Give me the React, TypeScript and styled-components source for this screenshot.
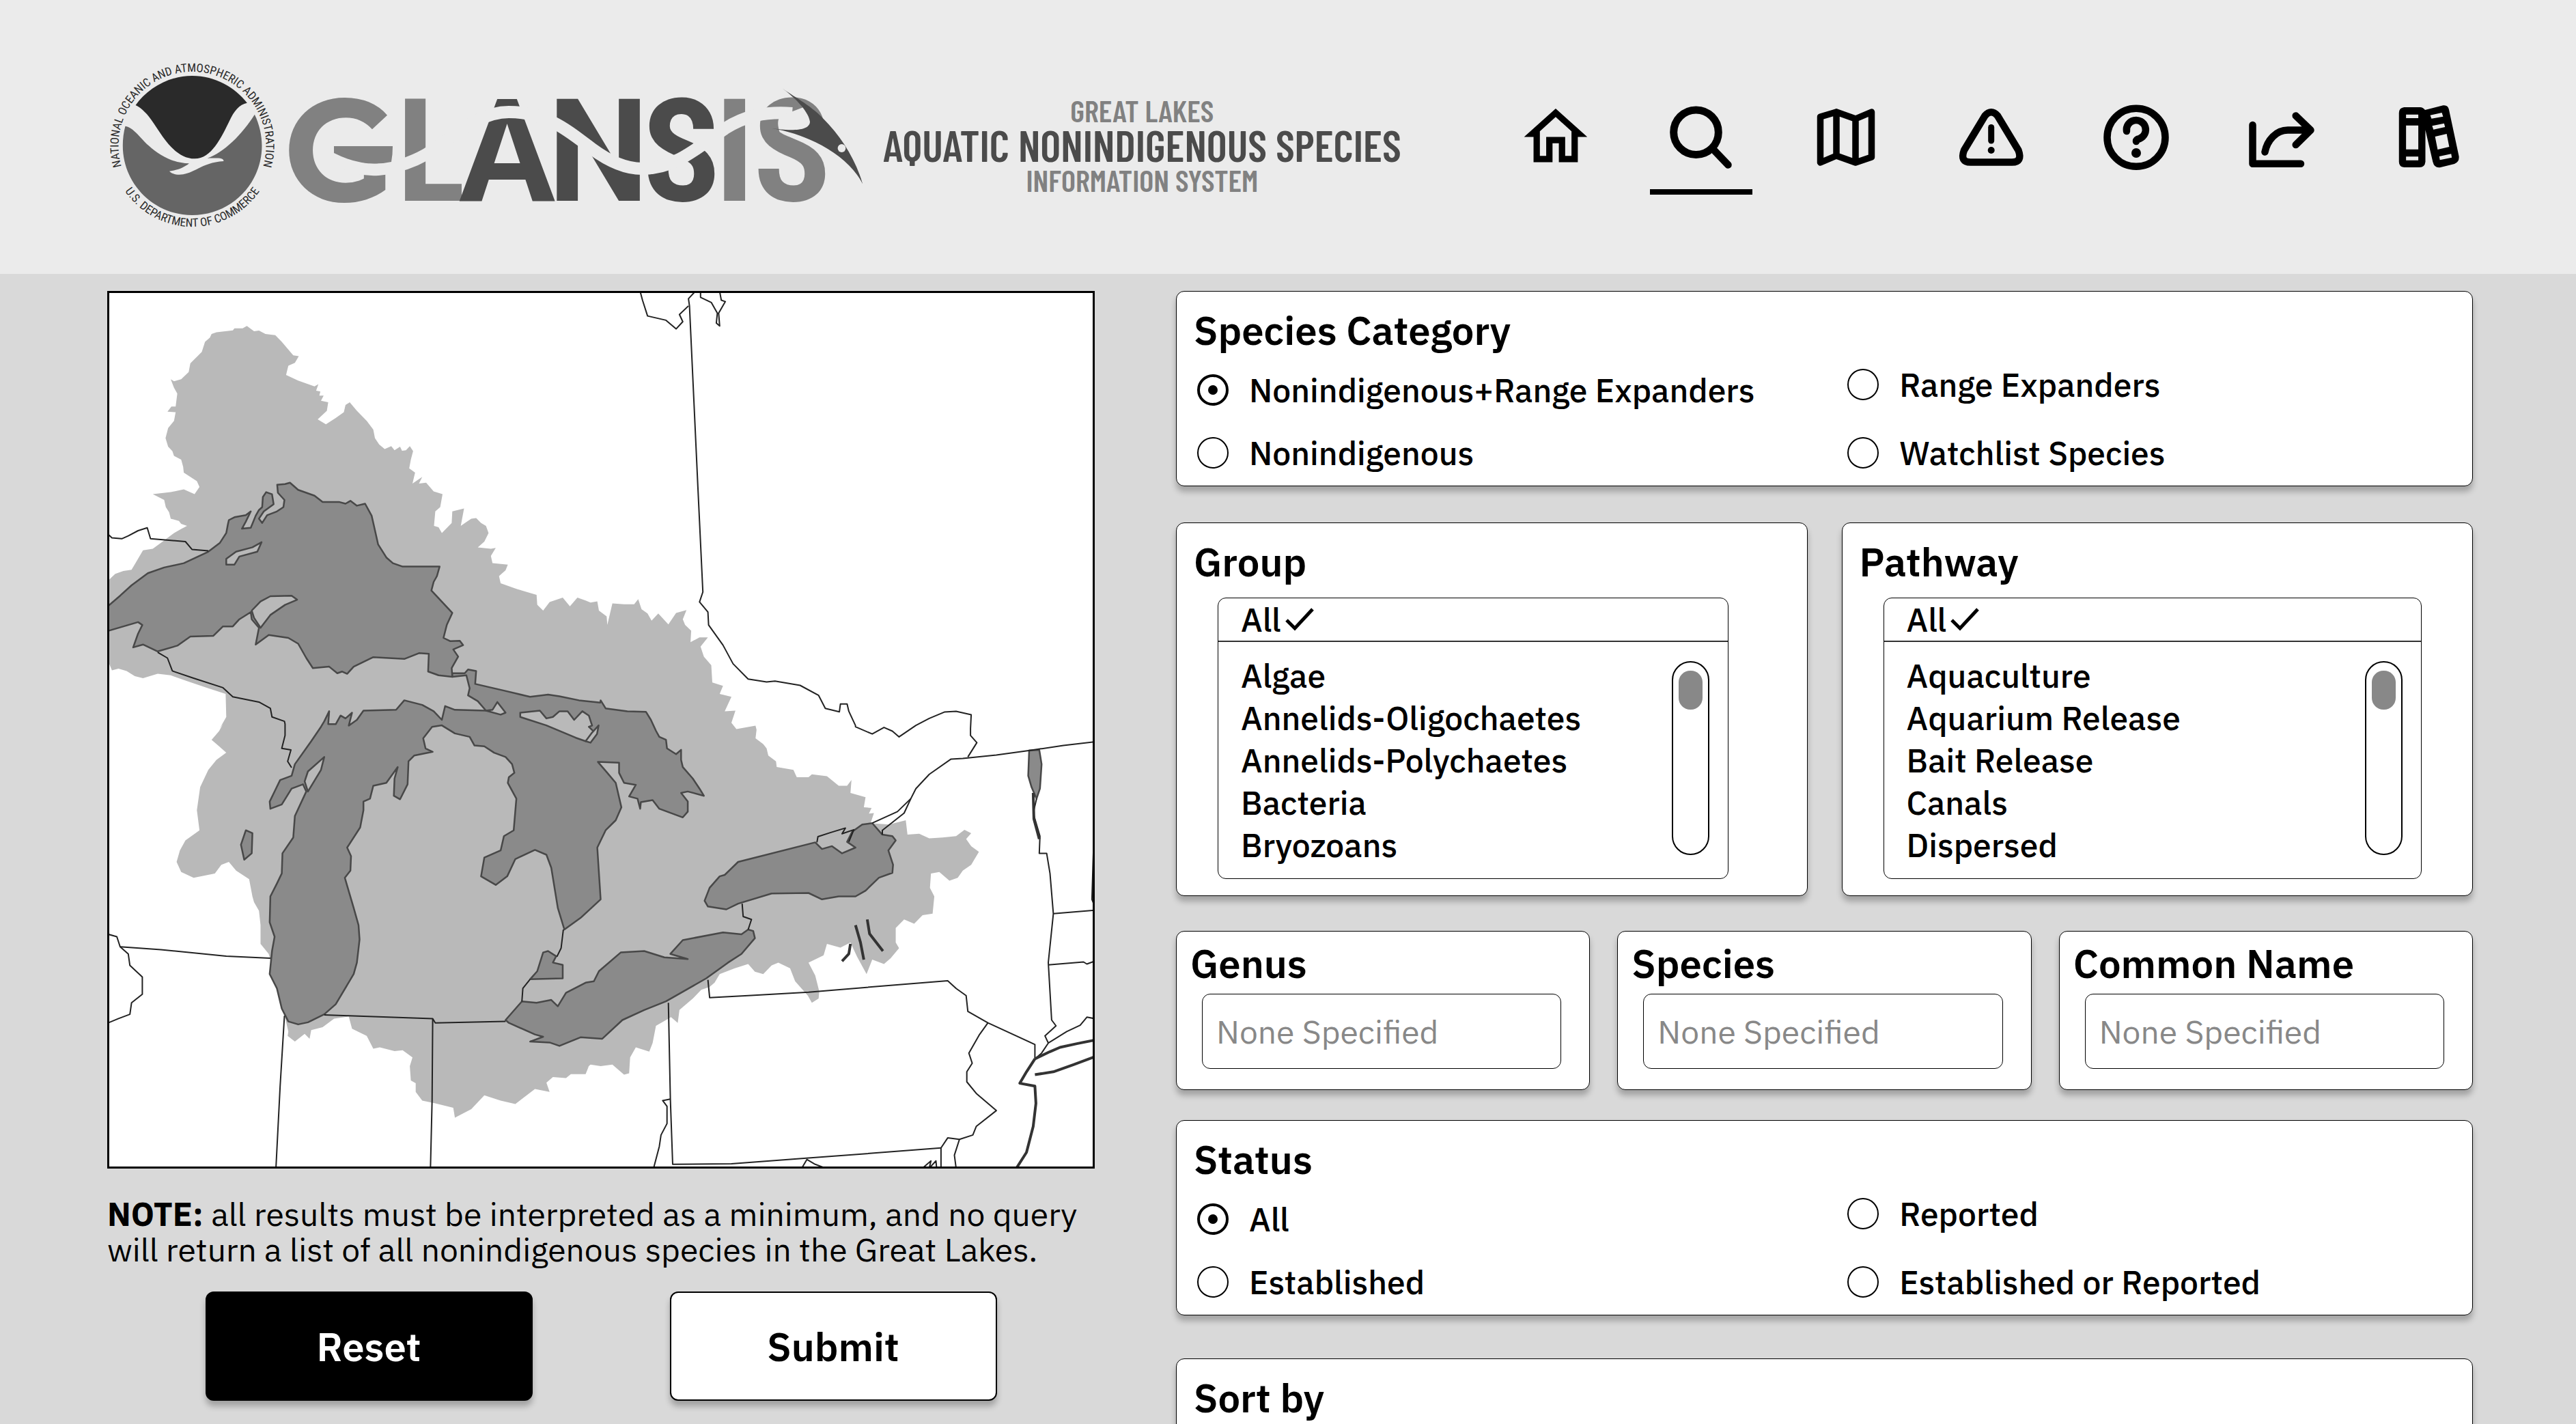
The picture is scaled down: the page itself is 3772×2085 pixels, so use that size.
import React from "react";
import styled, { createGlobalStyle } from "styled-components";

const GlobalStyle = createGlobalStyle`
  *, *::before, *::after { box-sizing: border-box; }
  body {
    margin: 0;
    background: #d9d9d9;
    color: #000;
    font-family: "IBM Plex Sans", Roboto, "Liberation Sans", sans-serif;
  }
  h1, h2, p, ul { margin: 0; padding: 0; }
`;

const Page = styled.div`
  height: 100vh;
  overflow-y: auto;
  scrollbar-width: none;
`;

/* ---------- header ---------- */

const Header = styled.header`
  display: flex;
  align-items: center;
  min-height: 401px;
  padding: 0 141px 0 157px;
  background: #ebebeb;
`;

const LogoSvg = styled.svg`
  display: block;
  flex: none;
  width: 1108px;
  height: 294px;
`;

const Tagline = styled.h1`
  display: flex;
  flex-direction: column;
  align-items: center;
  margin-left: 28px;
  padding-top: 22px;
  font-family: "Barlow Condensed", "Oswald", "Roboto Condensed", "Liberation Sans Narrow", sans-serif;
  font-weight: 600;
  white-space: nowrap;
`;

const TagSmall = styled.span`
  color: #818181;
  font-size: 45px;
  line-height: 46px;
`;

const TagLarge = styled.span`
  color: #4b4b4b;
  font-size: 64px;
  line-height: 56px;
`;

const Nav = styled.nav`
  display: flex;
  gap: 63px;
  margin-left: auto;
`;

const NavLink = styled.a<{ $active?: boolean }>`
  display: flex;
  justify-content: center;
  width: 150px;
  padding: 28px 0 20px;
  border-bottom: 8px solid ${(p) => (p.$active ? "#000" : "transparent")};
  color: #000;
`;

const NavSvg = styled.svg`
  display: block;
  width: 112px;
  height: 112px;
  fill: none;
  stroke: currentColor;
  stroke-width: 10.5;
  stroke-linecap: round;
  stroke-linejoin: round;
`;

function NavItem(props: { label: string; x: number; active?: boolean; children: React.ReactNode }) {
  return (
    <NavLink href="#" aria-label={props.label} aria-current={props.active ? "page" : undefined} $active={props.active}>
      <NavSvg viewBox={`${props.x} 143 112 112`} aria-hidden="true">
        {props.children}
      </NavSvg>
    </NavLink>
  );
}

const RING_FONT = "'Roboto Condensed', 'Liberation Sans Narrow', sans-serif";

const WORDMARK = [
  { letter: "G", x: 415, size: 212, color: "#818181", font: "Montserrat, Inter, 'Liberation Sans', sans-serif" },
  { letter: "L", x: 581, size: 210, color: "#818181", font: "'Roboto Condensed', Roboto, sans-serif" },
  { letter: "A", x: 672, size: 210, color: "#4b4b4b", font: "Roboto, 'Liberation Sans', sans-serif" },
  { letter: "N", x: 802, size: 210, color: "#4b4b4b", font: "Roboto, 'Liberation Sans', sans-serif" },
  { letter: "S", x: 941, size: 210, color: "#4b4b4b", font: "'Roboto Condensed', Roboto, sans-serif" },
  { letter: "I", x: 1045, size: 210, color: "#818181", font: "Roboto, 'Liberation Sans', sans-serif" },
  { letter: "S", x: 1103, size: 210, color: "#818181", font: "'Roboto Condensed', Roboto, sans-serif" },
];

function Logo() {
  return (
    <LogoSvg viewBox="157 54 1108 294" role="img" aria-label="NOAA GLANSIS">
      <defs>
        <path id="ringTop" d="M281.5 321 A108 108 0 1 1 281.6 321" />
        <path id="ringBottom" d="M162.5 213 A119 119 0 0 0 400.5 213" />
      </defs>
      <g transform="translate(130 70) scale(0.40816 0.33333)">
        <path
          fill="#2a2a2a"
          d="M168 252 C210 180 285 123 371 123 C455 123 525 175 568 242 C540 248 520 280 505 320 C475 395 440 487 380 487 C310 487 265 390 232 330 C212 292 190 265 168 252Z"
        />
        <path
          fill="#656565"
          d="M131 344 C160 350 180 390 215 430 C255 475 305 507 360 508 C340 527 320 537 289 542 C298 552 308 557 325 557 C380 555 400 505 484 498 C482 482 465 485 425 485 C485 460 550 380 595 293 C612 335 621 385 621 430 C621 598 510 735 371 735 C233 735 122 598 122 430 C122 400 125 370 131 344Z"
        />
      </g>
      <g fill="#2a2a2a" fontFamily={RING_FONT} fontSize="17" textAnchor="middle">
        <text>
          <textPath href="#ringTop" startOffset="50%">NATIONAL OCEANIC AND ATMOSPHERIC ADMINISTRATION</textPath>
        </text>
        <text>
          <textPath href="#ringBottom" startOffset="50%">U.S. DEPARTMENT OF COMMERCE</textPath>
        </text>
      </g>
      {WORDMARK.map((item) => (
        <text key={item.x} x={item.x} y="294" fill={item.color} fontFamily={item.font} fontSize={item.size} fontWeight="700">
          {item.letter}
        </text>
      ))}
      <path
        fill="none"
        stroke="#ebebeb"
        strokeWidth="18"
        d="M490 232 Q520 250 554 248 Q590 245 624 226 C665 200 700 164 745 164 C800 164 830 190 867 218 C890 235 915 247 940 247 C985 247 1015 222 1062 188 C1090 170 1120 163 1160 166"
      />
      {/* tail of the wave, where it starts inside the first letter */}
      <path fill="#818181" d="M489 214 H575 Q575 226 573 237 Q532 246 489 224Z" />
      <g transform="translate(750 90) scale(0.34439 0.33333)">
        <path fill="#ebebeb" d="M1140 240 C1125 260 1130 285 1137 310 C1180 340 1240 345 1290 368 L1300 260 L1240 200Z" />
        <path
          fill="#4b4b4b"
          d="M1148 118 C1190 150 1265 190 1320 248 C1400 330 1460 430 1490 538 C1455 465 1380 400 1290 355 C1230 325 1170 305 1105 294 C1150 300 1265 315 1266 265 C1262 225 1210 165 1148 118Z"
        />
        <ellipse cx="1401" cy="381" rx="17" ry="18" fill="#ebebeb" />
      </g>
    </LogoSvg>
  );
}

function MainNav() {
  return (
    <Nav aria-label="Main">
      <NavItem label="Home" x={2222}>
        <g transform="translate(2222.4 143) scale(4.63)">
          <path
            fill="currentColor"
            stroke="none"
            d="M12 5.69l5 4.5V18h-2v-6H9v6H7v-7.81l5-4.5M12 3L2 12h3v8h6v-6h2v6h6v-8h3L12 3z"
          />
        </g>
      </NavItem>
      <NavItem label="Search" x={2435} active>
        <circle cx="2483.5" cy="191.7" r="32.8" strokeWidth="11" />
        <path d="M2508 216 L2530.5 239.5" />
      </NavItem>
      <NavItem label="Map" x={2648}>
        <path strokeWidth="9.5" d="M2665.5 169 L2689 162 L2717 172 L2740.5 162 V228 L2717 236 L2689 226 L2665.5 236Z M2689 162 V226 M2717 172 V236" />
      </NavItem>
      <NavItem label="Alerts" x={2861}>
        <path d="M2906.5 167.5 Q2915.7 157 2925 167.5 L2955.5 218 Q2962 235.5 2946 235.5 H2885.5 Q2869.5 235.5 2876 218Z" />
        <path strokeWidth="9" d="M2915.7 184.5 V204" />
        <circle cx="2915.7" cy="218" r="5" fill="currentColor" stroke="none" />
      </NavItem>
      <NavItem label="Help" x={3074}>
        <circle cx="3128" cy="199.3" r="42.5" />
        <path d="M3114 190 A14 14 0 1 1 3133 201 Q3128 202 3128 205" />
        <circle cx="3128" cy="222" r="7" fill="currentColor" stroke="none" />
      </NavItem>
      <NavItem label="Share" x={3287}>
        <path d="M3298.5 181 V237.7 H3369 M3316.5 220.5 C3320 203 3333 188.5 3350 188.5 H3383 M3361.7 167.5 L3383.5 188.5 L3361.7 210" />
      </NavItem>
      <NavItem label="Library" x={3500}>
        <g transform="translate(2920 120) scale(0.47195 0.33333)">
          <path
            fill="currentColor"
            fillRule="evenodd"
            stroke="none"
            d="M1272 105 H1322 Q1330 105 1337 117 L1393 97 Q1408 94 1411 115 L1442 320 Q1444 345 1428 354 L1385 369 Q1366 374 1361 345 L1338 205 V345 Q1336 369 1320 369 H1272 Q1256 366 1256 345 V130 Q1256 108 1272 105Z M1278 137 H1316 V153 H1278Z M1278 185 H1316 V290 H1278Z M1278 322 H1316 V338 H1278Z M1353 140 L1389 129 L1393 146 L1357 155Z M1359 187 L1396 176 L1399 192 L1363 203Z M1368 234 L1404 222 L1412 279 L1376 291Z M1381 321 L1418 310 L1420 326 L1383 337Z"
          />
        </g>
      </NavItem>
    </Nav>
  );
}

/* ---------- basin map ---------- */

type Sheet = "nw" | "ne" | "sw" | "se";
type Segment = [Sheet, string];

/* Each survey sheet has its own origin and scale: [x, y, units per x, units per y]. */
const SHEETS: Record<Sheet, [number, number, number, number]> = {
  nw: [140, 410, 2.0907, 2.3758],
  ne: [850, 410, 2.0364, 2.3758],
  sw: [140, 1060, 2.0907, 2.3758],
  se: [850, 1060, 2.0364, 2.3758],
};

function trace(...segments: Segment[]): string {
  return segments
    .flatMap(([sheet, text]) => {
      const [ox, oy, sx, sy] = SHEETS[sheet];
      return text.split(" ").map((pair) => {
        const [x, y] = pair.split(",").map(Number);
        return `${(ox + x / sx).toFixed(1)},${(oy + y / sy).toFixed(1)}`;
      });
    })
    .join(" ");
}

const BASIN = trace(
  ["nw", "36,1048 60,1022 85,1012 110,1008 122,985 145,940 175,935 205,910 240,880 262,866 280,855 262,848 255,838 230,830 225,808 215,790 210,765 175,745 230,738 270,728 303,745 318,720 310,700 290,685 270,670 268,650 262,625 240,612 235,595 222,580 214,550 222,515 240,490 245,460 220,458 232,440 245,440 250,395 240,375 230,345 240,352 262,345 285,320 290,290 325,250 335,215 350,200 355,188 370,182 420,175 425,168 450,168 463,160 485,178 500,176 520,188 550,192 570,215 605,262 622,265 610,288 590,298 583,330 620,350 670,370 682,362 675,385 688,388 685,402 698,402 690,420 712,425 708,455 680,485 705,502 735,480 760,460 765,435 778,425 800,455 830,490 850,520 855,550 868,572 885,588 905,578 915,592 932,580 938,594 950,592 962,578 972,595 965,625 960,655 978,670 970,708 1000,685 990,708 1012,705 1035,735 1062,745 1055,790 1040,805 1036,855 1050,860 1060,880 1090,845 1092,805 1128,795 1118,855 1150,830 1165,828 1180,845 1195,855 1203,880 1190,910 1170,930 1210,935 1225,932 1210,960 1215,985 1262,990 1255,1010 1235,1030 1240,1055 1290,1075 1350,1095 1352,1130 1370,1150 1390,1120 1430,1105 1452,1135 1475,1105 1500,1115"],
  ["ne", "30,1122 50,1118 55,1150 78,1170 80,1200 95,1125 130,1128 160,1128 172,1110 182,1145 200,1160 212,1185 232,1160 262,1198 285,1158 316,1148 305,1180 312,1200 330,1220 328,1260 355,1243 380,1243 358,1275 368,1310 390,1340 393,1400 425,1412 415,1440 450,1450 430,1500 462,1498 450,1540 465,1562 522,1550"],
  ["se", "525,20 522,50 545,70 555,85 560,110 583,130 585,150 635,160 645,185 680,185 690,175 735,182 770,215 795,215 808,195 805,240 850,255 845,290 868,292 860,312 875,310 865,345 920,350 970,335 975,385 1010,382 1040,398 1080,395 1120,390 1145,368 1165,380 1150,400 1165,425 1188,445 1165,490 1140,510 1125,535 1100,545 1070,515 1045,520 1042,570 1055,600 1050,660 1020,665 995,695 965,680 940,710 940,760 950,780 925,815 905,835 870,820 853,870 825,810 805,760 775,778 735,765 725,805 680,830 700,875 712,930 710,955 690,970 678,945 640,895 625,850 590,830 570,840 545,870 520,862 500,835 460,850 415,870 400,900 385,915 360,925 335,955 295,995 290,1040 270,1020 225,1050 215,1110 205,1140 165,1125 148,1160 145,1215 130,1220 95,1185 60,1190 30,1185 0,1215"],
  ["sw", "1510,1190 1500,1218 1455,1218 1440,1232 1400,1228 1380,1248 1390,1280 1345,1270 1310,1300 1285,1322 1240,1310 1190,1292 1150,1340 1100,1370 1095,1335 1040,1320 1000,1310 980,1280 980,1250 965,1240 962,1190 970,1160 940,1135 915,1138 870,1125 850,1130 830,1085 785,1060 775,1018 730,1025 695,1055 660,1065 655,1095 640,1078 610,1105 588,1085 590,1070 580,1020 530,800 505,765 505,700 500,650 485,620 480,600 470,540 430,510 408,480 385,490 365,520 300,535 262,515 248,480 258,440 275,405 318,370 310,300 320,220 345,160 370,125 400,100 375,75 355,55 378,25 390,0"],
  ["nw", "380,1560 400,1520 398,1440 345,1420 280,1395 230,1375 190,1370 145,1385 120,1378 95,1360 70,1352 50,1358 36,1320"]
);

const LAKES = [
  /* Superior */
  trace(["nw", "34,1138 75,1098 110,1062 160,1020 210,1000 270,985 345,945 380,915 400,880 405,850 408,835 425,825 460,818 475,805 460,840 448,865 475,862 490,820 500,800 510,790 512,755 522,738 540,745 545,780 515,805 500,830 510,845 525,818 555,805 575,790 578,765 558,740 556,712 580,710 595,705 620,730 670,750 695,772 745,772 765,778 780,768 800,785 825,778 845,820 855,870 865,920 890,965 910,985 940,997 1053,997 1045,1030 1035,1050 1028,1080 1092,1158 1075,1200 1065,1245 1085,1256 1115,1255 1125,1270 1095,1285 1110,1310 1090,1350 1092,1380 1050,1375 1018,1362 1020,1300 990,1298 945,1318 850,1312 790,1345 770,1370 755,1362 740,1368 715,1345 665,1350 645,1315 620,1265 590,1245 530,1235 490,1268 500,1210 478,1180 475,1155 440,1180 420,1205 390,1205 360,1238 290,1240 250,1272 190,1292 145,1268 115,1278 130,1230 143,1200 130,1190 34,1222"]),
  /* Michigan and Huron */
  trace(
    ["nw", "1092,1368 1130,1368 1140,1355 1165,1360 1162,1405 1250,1428 1330,1450 1385,1442 1420,1448 1480,1462 1545,1470"],
    ["ne", "60,1462 75,1490 140,1500 195,1502 210,1530 225,1568"],
    ["se", "235,45 255,55 258,85 285,105 300,90 300,125 305,150 335,190 355,225 368,250 320,235 300,240 320,270 320,305 305,325 235,295 215,265 180,272 178,295 170,260 145,252 165,212 130,205 115,170 115,135 52,132 80,170 105,205 122,290 105,335 75,370 50,430 60,610 0,675"],
    ["sw", "1435,715 1415,640 1395,500 1380,455 1345,438 1285,470 1260,530 1225,560 1180,530 1190,465 1240,440 1250,390 1280,370 1288,260 1262,205 1265,185 1282,170 1275,140 1255,115 1220,100 1190,78 1160,75 1145,45 1100,33 1060,5 1030,10 1003,50 1010,85 1032,97 975,110 958,130 955,210 932,262 913,250 915,190 925,150 890,205 850,215 840,260 820,270 820,300 810,360 770,430 782,460 780,510 763,535 790,640 805,700 808,750 800,830 790,870 735,975 700,1010 650,1038 620,1045 590,1035 570,990 555,920 533,870 540,790 548,740 533,690 535,600 555,555 570,520 572,450 605,395 610,320 645,235 635,210 600,225 570,280 535,295 533,270 550,230 565,195 600,180 610,140 660,60 690,10"],
    ["nw", "700,1535 715,1500 712,1545 735,1545 750,1515 765,1525 785,1505 775,1550 800,1530 820,1498 920,1495 945,1462 1000,1478 1035,1500 1060,1530 1070,1482 1100,1495 1195,1498 1170,1465 1140,1445 1145,1420 1135,1375 1092,1380"]
  ),
  /* Erie */
  trace(
    ["sw", "1255,1030 1305,965 1350,970 1395,960 1415,982 1440,935 1500,900"],
    ["se", "40,895 55,860 120,795 190,790 250,812 320,818 268,800 305,752 425,725 480,732 500,715 515,720 520,745 480,800 440,830 375,885 255,965 190,995 125,1030 65,1095 0,1090"],
    ["sw", "1420,1120 1390,1108 1330,1105 1370,1088 1345,1080 1265,1040"]
  ),
  /* Ontario */
  trace(["se", "370,615 385,570 415,530 430,525 470,480 700,412 720,435 750,425 780,450 820,430 795,410 810,375 840,350 870,345 900,385 930,390 940,405 918,440 932,490 930,518 890,535 850,580 820,600 770,600 720,610 680,588 570,590 470,625 435,645 380,635"]),
  /* St. Clair */
  trace(["sw", "1370,795 1385,790 1410,808 1400,830 1430,838 1430,885 1330,888 1352,860"]),
  /* Winnebago */
  trace(["sw", "460,370 480,380 478,450 455,472 445,420"]),
  /* Champlain */
  trace(["se", "1338,92 1368,90 1375,140 1370,225 1360,260 1345,220 1335,180"]),
];

const ISLANDS = [
  trace(["nw", "400,990 400,970 430,945 480,930 508,912 495,945 440,962 425,990"]),
  trace(["nw", "478,1150 505,1118 535,1100 600,1098 617,1112 580,1130 535,1165 505,1210 485,1175"]),
  trace(
    ["nw", "1300,1505 1360,1498 1380,1525 1400,1520 1420,1500 1445,1500 1465,1530 1490,1500 1510,1515 1520,1550"],
    ["sw", "1510,10 1528,30 1500,60 1470,48 1380,5"],
    ["nw", "1300,1520"]
  ),
  trace(["nw", "1195,1498 1215,1495 1230,1468 1255,1505 1240,1512"]),
  trace(["sw", "640,200 650,165 700,115 690,160 650,235"]),
  trace(["sw", "1500,60 1520,30 1540,5 1535,35 1515,65"]),
];

const BORDERS = [
  trace(["nw", "34,880 50,897 80,900 100,890 130,872 158,862 168,900 275,910 295,937 345,942"]),
  trace(["nw", "190,1295 220,1315 235,1360 300,1385 390,1418 420,1450 500,1468 535,1490 540,1520 578,1535"], ["sw", "580,0 580,40 570,85 598,90 588,130 600,152"]),
  trace(["ne", "342,40 322,65 325,90 350,720 365,1085 355,1120 380,1155 382,1200 425,1270 455,1335 500,1388 555,1398 580,1395 655,1410 710,1445 730,1490 772,1502 775,1475 795,1475 800,1500 820,1550"], ["se", "820,10 870,35 905,12 930,25 950,45 1000,5"], ["ne", "1040,1525 1085,1503 1120,1500 1165,1512 1163,1560"], ["se", "1163,40 1182,65 1155,115"]),
  trace(["ne", "178,40 185,70 200,125 255,140 285,170 305,145 295,120 322,90"]),
  trace(["ne", "358,40 358,60 390,78 408,115 405,150 415,160 412,115 432,75 420,70 415,40"]),
  trace(["se", "870,345 945,305 985,260 1000,225 1040,175 1105,122 1140,120 1240,108 1340,92 1440,75 1533,62"]),
  trace(["se", "900,385 900,370 965,310 985,260"]),
  trace(["se", "1360,260 1350,310 1370,390 1368,450 1390,450 1400,520 1410,660 1395,830 1405,1030 1418,1050 1385,1085 1395,1110 1375,1145 1355,1165"]),
  trace(["se", "1410,660 1533,648"]),
  trace(["se", "1395,838 1500,828 1510,835 1533,825"]),
  trace(["se", "380,890 385,952 500,945 680,933 1095,893 1120,920 1150,945 1155,1000 1215,1040 1355,1115 1355,1165"]),
  trace(["se", "1215,1040 1190,1080 1158,1145 1168,1180 1152,1210 1152,1245 1180,1285 1240,1345 1180,1400 1170,1430 1130,1445 1095,1440 1075,1475 1075,1545"]),
  trace(["se", "1130,1445 1115,1500 1120,1545"]),
  trace(["se", "262,970 268,1305 275,1532 450,1530 680,1510 1075,1475"]),
  trace(["se", "268,1305 245,1310 258,1330 258,1390 240,1430 235,1470 218,1545"]),
  trace(["se", "660,1545 675,1515 700,1532 730,1545"]),
  trace(["se", "1020,1545 1045,1520 1040,1545 1060,1520 1062,1545"]),
  trace(["se", "1395,1110 1450,1070 1490,1048 1510,1020 1533,1025"]),
  trace(["sw", "578,1015 565,1260 552,1548"]),
  trace(["sw", "700,1012 775,1015 1032,1025 1040,1040 1255,1035"]),
  trace(["sw", "1032,1025 1030,1310 1025,1548"]),
  trace(["sw", "75,775 200,785 400,808 535,815"]),
  trace(["sw", "34,730 65,740 75,775 100,800 105,840 143,880 143,940 110,970 105,1010 70,1025 38,1040"]),
  trace(["sw", "1432,715 1425,780 1412,810"]),
  trace(["sw", "1330,888 1308,920 1305,965"]),
  trace(["se", "482,625 485,670 510,680 500,715"]),
  trace(["se", "705,412 708,392 745,378 790,362 780,382 815,368 800,410"]),
  trace(["se", "1530,425 1525,610 1532,630"]),
];

const COASTS = [
  trace(["se", "1355,1165 1400,1140 1430,1125 1480,1112 1533,1100"]),
  trace(["se", "1355,1220 1410,1210 1470,1185 1533,1158"]),
  trace(["se", "1355,1165 1330,1210 1310,1250 1355,1260 1358,1320 1350,1400 1330,1490 1300,1545"]),
  trace(["se", "820,700 835,760 845,820"]),
  trace(["se", "855,680 862,730 902,790"]),
  trace(["se", "805,765 800,800 780,825"]),
  trace(["se", "1350,240 1352,330 1368,400"]),
];

const MapFrame = styled.div`
  border: 3px solid #000;
  background: #fff;
`;

const MapSvg = styled.svg`
  display: block;
  width: 100%;
  height: auto;
  stroke-linejoin: round;
`;

function BasinMap() {
  return (
    <MapFrame>
      <MapSvg viewBox="160 429 1440 1279" role="img" aria-label="Great Lakes basin">
        <polygon points={BASIN} fill="#b9b9b9" />
        <g fill="#8a8a8a" stroke="#484848" strokeWidth="2.5">
          {LAKES.map((points) => (
            <polygon key={points} points={points} />
          ))}
        </g>
        <g fill="#b9b9b9" stroke="#484848" strokeWidth="2.5">
          {ISLANDS.map((points) => (
            <polygon key={points} points={points} />
          ))}
        </g>
        <g fill="none" stroke="#222" strokeWidth="2">
          {BORDERS.map((points) => (
            <polyline key={points} points={points} />
          ))}
        </g>
        <g fill="none" stroke="#333" strokeWidth="4">
          {COASTS.map((points) => (
            <polyline key={points} points={points} />
          ))}
        </g>
      </MapSvg>
    </MapFrame>
  );
}

/* ---------- page body ---------- */

const Main = styled.main`
  display: grid;
  grid-template-columns: minmax(0, 1446fr) minmax(0, 1899fr);
  gap: 119px;
  align-items: start;
  padding: 25px 151px 64px 157px;
`;

const Note = styled.p`
  margin-top: 40px;
  font-size: 48px;
  line-height: 52px;
  white-space: nowrap;
`;

const Actions = styled.div`
  display: flex;
  justify-content: center;
  gap: 201px;
  margin-top: 36px;
`;

const ActionButton = styled.button<{ $primary?: boolean }>`
  width: 479px;
  height: 160px;
  border: 2px solid #000;
  border-radius: 12px;
  background: ${(p) => (p.$primary ? "#000" : "#fff")};
  color: ${(p) => (p.$primary ? "#fff" : "#000")};
  box-shadow: 0 8px 8px rgba(0, 0, 0, 0.25);
  font-family: inherit;
  font-size: 58px;
  font-weight: 600;
`;

const Card = styled.section`
  padding: 25px 0 17px;
  border: 1px solid #000;
  border-radius: 12px;
  background: #fff;
  box-shadow: 0 8px 8px rgba(0, 0, 0, 0.25);
`;

const CardTitle = styled.h2`
  padding-left: 25px;
  font-size: 58px;
  font-weight: 600;
  line-height: 64px;
`;

const Row = styled.div<{ $columns?: number; $gap?: number; $space?: number }>`
  display: grid;
  grid-template-columns: repeat(${(p) => p.$columns ?? 1}, minmax(0, 1fr));
  gap: ${(p) => p.$gap ?? 0}px;
  margin-top: ${(p) => p.$space ?? 0}px;
`;

const RadioGrid = styled.div`
  display: grid;
  grid-template-columns: 51% 1fr;
  margin-top: 16px;
  padding-left: 30px;
`;

const RadioColumn = styled.div<{ $gap: number }>`
  display: flex;
  flex-direction: column;
  justify-content: flex-end;
  gap: ${(p) => p.$gap}px;
`;

const RadioLabel = styled.label`
  display: flex;
  align-items: center;
  gap: 30px;
  font-size: 48px;
  font-weight: 500;
  line-height: 62px;
`;

const Radio = styled.input`
  appearance: none;
  display: grid;
  place-items: center;
  width: 46px;
  height: 46px;
  margin: 0;
  border: 2px solid #000;
  border-radius: 50%;
  background: #fff;

  &:checked {
    border-width: 4px;
  }

  &:checked::before {
    content: "";
    width: 14px;
    height: 14px;
    border-radius: 50%;
    background: #000;
  }
`;

function RadioCard(props: { title: string; name: string; left: string[]; right: string[] }) {
  const option = (text: string, checked: boolean) => (
    <RadioLabel key={text}>
      <Radio type="radio" name={props.name} defaultChecked={checked} />
      {text}
    </RadioLabel>
  );
  return (
    <Card>
      <CardTitle>{props.title}</CardTitle>
      <RadioGrid>
        <RadioColumn $gap={30}>{props.left.map((text, i) => option(text, i === 0))}</RadioColumn>
        <RadioColumn $gap={38}>{props.right.map((text) => option(text, false))}</RadioColumn>
      </RadioGrid>
    </Card>
  );
}

const ListFrame = styled.div<{ $inset: number }>`
  margin: 20px ${(p) => p.$inset}px 7px 60px;
  border: 1px solid #000;
  border-radius: 12px;
  font-size: 48px;
  font-weight: 500;
  line-height: 62px;
`;

const ListAll = styled.div`
  display: flex;
  align-items: center;
  gap: 5px;
  padding-left: 33px;
  border-bottom: 2px solid #333;
`;

const ListBody = styled.div`
  display: flex;
  justify-content: space-between;
`;

const Options = styled.ul`
  padding: 18px 0 18px 33px;
  list-style: none;
`;

const ScrollTrack = styled.div`
  width: 55px;
  height: 284px;
  margin: 28px 27px 0 0;
  padding: 12px 8px;
  border: 2px solid #000;
  border-radius: 28px;
`;

const ScrollThumb = styled.div`
  height: 57px;
  border-radius: 17px;
  background: #888;
`;

const CheckSvg = styled.svg`
  width: 44px;
  height: 36px;
  fill: none;
  stroke: #000;
  stroke-width: 5;
`;

function ListCard(props: { title: string; inset: number; options: string[] }) {
  return (
    <Card>
      <CardTitle>{props.title}</CardTitle>
      <ListFrame $inset={props.inset} role="listbox" aria-label={props.title}>
        <ListAll role="option" aria-selected="true">
          All
          <CheckSvg viewBox="0 0 44 36" aria-hidden="true">
            <path d="M3 19 L15 31 L41 3" />
          </CheckSvg>
        </ListAll>
        <ListBody>
          <Options>
            {props.options.map((text) => (
              <li key={text} role="option" aria-selected="false">
                {text}
              </li>
            ))}
          </Options>
          <ScrollTrack>
            <ScrollThumb />
          </ScrollTrack>
        </ListBody>
      </ListFrame>
    </Card>
  );
}

const FieldCard = styled(Card)`
  padding: 15px 0 30px;
`;

const FieldTitle = styled(CardTitle)`
  padding-left: 20px;
`;

const FieldInput = styled.input`
  display: block;
  width: calc(100% - 78px);
  height: 110px;
  margin: 12px 0 0 37px;
  padding: 0 20px;
  border: 1px solid #000;
  border-radius: 12px;
  background: #fff;
  font-family: inherit;
  font-size: 48px;

  &::placeholder {
    color: #888;
    opacity: 1;
  }
`;

function Field(props: { title: string }) {
  const id = props.title.toLowerCase().replace(" ", "-");
  return (
    <FieldCard>
      <FieldTitle>
        <label htmlFor={id}>{props.title}</label>
      </FieldTitle>
      <FieldInput id={id} type="text" placeholder="None Specified" />
    </FieldCard>
  );
}

export default function App() {
  return (
    <Page>
      <GlobalStyle />
      <Header>
        <Logo />
        <Tagline>
          <TagSmall>GREAT LAKES</TagSmall>
          <TagLarge>AQUATIC NONINDIGENOUS SPECIES</TagLarge>
          <TagSmall>INFORMATION SYSTEM</TagSmall>
        </Tagline>
        <MainNav />
      </Header>
      <Main>
        <div>
          <BasinMap />
          <Note>
            <b>NOTE:</b> all results must be interpreted as a minimum, and no query
            <br />
            will return a list of all nonindigenous species in the Great Lakes.
          </Note>
          <Actions>
            <ActionButton type="reset" $primary>
              Reset
            </ActionButton>
            <ActionButton type="submit">Submit</ActionButton>
          </Actions>
        </div>
        <div>
          <RadioCard
            title="Species Category"
            name="category"
            left={["Nonindigenous+Range Expanders", "Nonindigenous"]}
            right={["Range Expanders", "Watchlist Species"]}
          />
          <Row $columns={2} $gap={50} $space={53}>
            <ListCard
              title="Group"
              inset={115}
              options={["Algae", "Annelids-Oligochaetes", "Annelids-Polychaetes", "Bacteria", "Bryozoans"]}
            />
            <ListCard
              title="Pathway"
              inset={74}
              options={["Aquaculture", "Aquarium Release", "Bait Release", "Canals", "Dispersed"]}
            />
          </Row>
          <Row $columns={3} $gap={40} $space={51}>
            <Field title="Genus" />
            <Field title="Species" />
            <Field title="Common Name" />
          </Row>
          <Row $space={44}>
            <RadioCard
              title="Status"
              name="status"
              left={["All", "Established"]}
              right={["Reported", "Established or Reported"]}
            />
          </Row>
          <Row $space={63}>
            <Card>
              <CardTitle>Sort by</CardTitle>
            </Card>
          </Row>
        </div>
      </Main>
    </Page>
  );
}
